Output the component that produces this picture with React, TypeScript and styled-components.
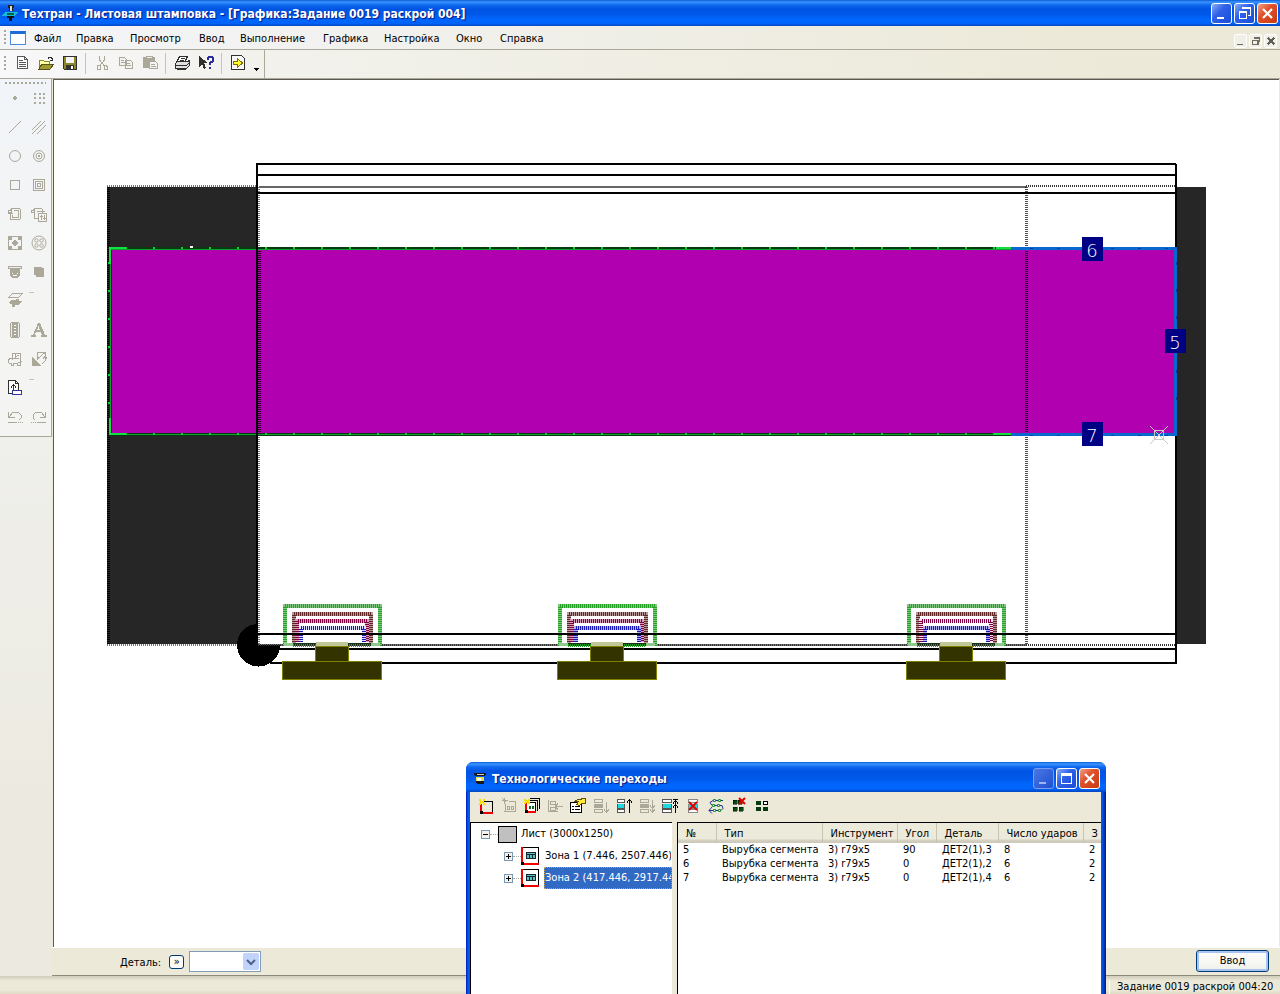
import React from "react";
import styled, { createGlobalStyle, css } from "styled-components";

const face = "#ece9d8";
const shade = "#aca899";

const GlobalStyle = createGlobalStyle`
  * { box-sizing: border-box; }
  body { margin: 0; overflow: hidden; }
  svg { overflow: visible; }
  body, button, select, input {
    font-family: "DejaVu Sans Condensed", "DejaVu Sans", sans-serif;
    font-size: 11px;
    line-height: 14px;
    color: #000;
  }
`;

const titleGradient = css`
  background: linear-gradient(180deg, #0a5bd8 0, #3b95ff 2px, #1068ee 5px, #0054e3 9px, #0058e9 55%, #0066fd 75%, #0064fa 90%, #0046c0 100%);
`;

const Shell = styled.div`
  position: relative;
  display: flex;
  flex-direction: column;
  height: 100vh;
  overflow: hidden;
  background: ${face};
`;

const TitleBar = styled.header<{ $tall?: boolean }>`
  ${titleGradient}
  display: flex;
  align-items: center;
  flex: none;
  height: ${(p) => (p.$tall ? 30 : 26)}px;
  padding: ${(p) => (p.$tall ? "3px 6px 0 7px" : "0 2px 0 2px")};
  gap: ${(p) => (p.$tall ? 5 : 4)}px;
`;

const Title = styled.h1`
  flex: 1;
  margin: 0;
  padding-top: 1px;
  font-size: 12px;
  line-height: 16px;
  font-weight: bold;
  color: #fff;
  text-shadow: 1px 1px 1px #0a1883;
  white-space: nowrap;
`;

const CaptionButtons = styled.div`
  display: flex;
  gap: 2px;
`;

const CaptionButton = styled.button<{ $kind?: "close" | "off" }>`
  display: flex;
  align-items: center;
  justify-content: center;
  width: 21px;
  height: 21px;
  padding: 0 1px 1px 0;
  border: 1px solid ${(p) => (p.$kind === "off" ? "#7c9cf0" : "#fff")};
  border-radius: 3px;
  background: ${(p) =>
    p.$kind === "close"
      ? "linear-gradient(135deg, #f0a088, #e0512b 40%, #c83a10)"
      : p.$kind === "off"
        ? "linear-gradient(135deg, #4a78e4, #1f4fd0)"
        : "linear-gradient(135deg, #8aacf8, #2f62e8 40%, #1a4cd8)"};
`;

const MenuBar = styled.nav`
  display: flex;
  align-items: center;
  flex: none;
  height: 24px;
  padding: 0 3px 0 4px;
  background: linear-gradient(90deg, #f4f5f9 0, #f0efe8 45%, ${face} 85%);
  border-bottom: 1px solid ${shade};
`;

const MenuItem = styled.a<{ $w: number }>`
  flex: none;
  width: ${(p) => p.$w}px;
  padding-top: 2px;
  color: #000;
  text-decoration: none;
  white-space: nowrap;
`;

const MdiButtons = styled.div`
  display: flex;
  align-self: flex-end;
  gap: 2px;
  margin-left: auto;
  padding-bottom: 1px;
`;

const MdiButton = styled.button`
  display: flex;
  align-items: center;
  justify-content: center;
  width: 13px;
  height: 14px;
  padding: 0;
  border: 1px solid #fff;
  border-radius: 2px;
  background: #f1f0e6;
`;

const Grip = styled.div<{ $across?: boolean }>`
  flex: none;
  ${(p) =>
    p.$across
      ? css`height: 2px; margin: 0 5px; background: repeating-linear-gradient(90deg, ${shade} 0 2px, transparent 2px 4px);`
      : css`width: 2px; height: 15px; margin-right: 4px; background: repeating-linear-gradient(180deg, ${shade} 0 2px, transparent 2px 4px);`}
`;

const DocIcon = styled.span`
  width: 16px;
  height: 14px;
  margin: 0 8px 0 0;
  border: 1px solid #4a8ad8;
  border-top: 3px solid #1c6cd8;
  background: #fff;
`;

const ToolRow = styled.div`
  flex: none;
  display: flex;
  height: 29px;
  background: linear-gradient(90deg, #f4f4f2, ${face} 90%);
  border-bottom: 1px solid ${shade};
`;

const ToolStrip = styled.div`
  display: flex;
  align-items: center;
  width: 265px;
  padding: 0 0 2px 4px;
  background: linear-gradient(90deg, #f8f8fa, #f2f1ec);
  border-right: 1px solid ${shade};
`;

const ToolButton = styled.button<{ $w?: number; $h?: number }>`
  display: flex;
  align-items: center;
  justify-content: center;
  flex: none;
  width: ${(p) => p.$w ?? 24}px;
  height: ${(p) => p.$h ?? 24}px;
  padding: 0 ${(p) => (p.$w ?? 24) % 2}px ${(p) => (p.$h ?? 24) % 2}px 0;
  border: 0;
  background: none;
`;

const Separator = styled.span`
  flex: none;
  width: 1px;
  height: 21px;
  margin: 0 4px 0 3px;
  background: #c9c5b0;
`;

const Workspace = styled.main`
  flex: 1;
  display: flex;
  min-height: 0;
`;

const SideColumn = styled.aside`
  flex: none;
  width: 52px;
  background: linear-gradient(180deg, #f2f4f8, #eceae0 80%);
`;

const Palette = styled.div`
  height: 358px;
  padding-top: 3px;
  border-right: 1px solid ${shade};
  border-bottom: 1px solid ${shade};
  background: linear-gradient(180deg, #f1f4f8, #f4f4f2 70%);
`;

const PaletteGrid = styled.div`
  display: grid;
  grid-template-columns: 24px 24px;
  padding-left: 3px;
`;

const Document = styled.section`
  flex: 1;
  display: flex;
  flex-direction: column;
  min-width: 0;
`;

const Canvas = styled.div`
  flex: 1;
  min-height: 0;
  overflow: hidden;
  margin: 0 1px;
  background: #fff;
  border-top: 1px solid #5c5a50;
  border-left: 1px solid #5c5a50;
  svg { display: block; }
`;

const InputBar = styled.form`
  flex: none;
  display: flex;
  align-items: center;
  height: 29px;
  padding: 0 11px 0 68px;
  background: ${face};
  border-top: 1px solid #fff;
  border-bottom: 1px solid #8c8a7c;
  label { padding-top: 2px; }
`;

const MoreButton = styled.button`
  width: 15px;
  height: 14px;
  margin: 0 5px 0 8px;
  padding: 0;
  border: 1px solid #003c74;
  border-radius: 3px;
  background: #fbfbf8;
  line-height: 10px;
`;

const Combo = styled.span`
  display: flex;
  width: 72px;
  height: 21px;
  padding: 1px;
  border: 1px solid #7f9db9;
  background: #fff;
  position: relative;
  svg {
    position: absolute;
    right: 1px;
    top: 1px;
    pointer-events: none;
  }
  select {
    appearance: none;
    width: 100%;
    border: 0;
    background: transparent;
  }
`;

const EnterButton = styled.button`
  width: 73px;
  height: 22px;
  margin-left: auto;
  margin-bottom: 2px;
  border: 1px solid #003c74;
  border-radius: 3px;
  background: linear-gradient(#fff, #f0f0ea);
  box-shadow: inset 0 0 0 2px #a9c3f0;
`;

const StatusBar = styled.footer`
  flex: none;
  display: flex;
  justify-content: flex-end;
  align-items: center;
  height: 18px;
  padding: 3px 0 0;
  background: linear-gradient(180deg, #d0cdbd, #ece9d8 5px, #ece9d8 14px, #dedac6);
`;

const StatusText = styled.span`
  width: 171px;
  padding-left: 7px;
  border-left: 1px solid #fff;
  white-space: nowrap;
`;

const Floating = styled.section`
  position: absolute;
  left: 466px;
  right: 174px;
  bottom: 0;
  display: flex;
  flex-direction: column;
  height: 232px;
  border-radius: 7px 7px 0 0;
  overflow: hidden;
  background: linear-gradient(90deg, #0018b8 0, #0858e8 2px, #0858e8 636px, #001890 100%);
`;

const FloatingBody = styled.div`
  flex: 1;
  display: flex;
  flex-direction: column;
  min-height: 0;
  margin: 0 5px 0 4px;
  background: ${face};
`;

const FloatingTools = styled.div`
  flex: none;
  display: flex;
  align-items: center;
  height: 30px;
  padding: 0 0 2px 5px;
`;

const Split = styled.div`
  flex: 1;
  display: flex;
  gap: 5px;
  min-height: 0;
`;

const Pane = styled.div<{ $w?: number }>`
  ${(p) => (p.$w ? `flex: none; width: ${p.$w}px;` : "flex: 1; min-width: 0;")}
  overflow: hidden;
  background: #fff;
  border-top: 1px solid #000;
  border-left: 1px solid #000;
`;

const TreeRow = styled.div<{ $child?: boolean }>`
  display: flex;
  align-items: center;
  height: 22px;
  padding-left: ${(p) => (p.$child ? 33 : 10)}px;
`;

const Expander = styled.button`
  flex: none;
  display: flex;
  width: 9px;
  height: 9px;
  padding: 1px;
  border: 1px solid #7898b5;
  background: #f4f2ec;
`;

const Dots = styled.span`
  flex: none;
  width: 8px;
  border-top: 1px dotted ${shade};
`;

const SheetSwatch = styled.span`
  width: 19px;
  height: 17px;
  margin-right: 3px;
  border: 1px solid #000;
  background: #c0c0c0;
`;

const TreeLabel = styled.span<{ $selected?: boolean; $gap?: number }>`
  flex: 1;
  height: 22px;
  margin-left: ${(p) => p.$gap ?? 0}px;
  padding: 0;
  line-height: 20px;
  white-space: nowrap;
  overflow: hidden;
  border: 1px dotted ${(p) => (p.$selected ? "#d09a40" : "transparent")};
  background: ${(p) => (p.$selected ? "#316ac5" : "transparent")};
  color: ${(p) => (p.$selected ? "#fff" : "#000")};
`;

const Steps = styled.table`
  width: 100%;
  table-layout: fixed;
  border-collapse: collapse;
  white-space: nowrap;
  td, th { overflow: hidden; font-weight: normal; text-align: left; }
  td { height: 14px; padding: 0 0 0 6px; }
  td:first-child { padding-left: 5px; }
  th {
    height: 20px;
    padding: 1px 0 0 8px;
    background: linear-gradient(180deg, #ebeadb 16px, #d6d2c2 17px, #cbc7b8);
  }
  th + th { border-left: 1px solid #c7c5b2; }
`;

const K = "#303030";
const G = shade;

/* 16×16 toolbar glyphs */
const glyphs: Record<string, React.ReactNode> = {
  app: (<><path d="M6 0h6v3h-1v3h-4v-3h-1z" fill="#222" /><path d="M8 1h2v5h-2z" fill="#ddd" /><path d="M0 10l4-3h12l-4 4h-12z" fill="#18b8d8" /><path d="M5 8h7v2h-7z" fill="#064" /><path d="M5 11h7v2h-2v3h-3v-3h-2z" fill="#111" /></>),
  fresh: (<path d="M3.5 1.500h7l3 3v9h-10zM10.500 1.500v3h3M5 5.500h4M5 7.500h7M5 9.500h7M5 11.500h7" fill="#fff" stroke={K} strokeOpacity=".8" />),
  open: (<><path d="M1.500 13.500v-8h4l1 1h5v3" fill="#ffffa8" stroke="#888820" /><path d="M1 14l3-5h12l-4 5z" fill="#a09a30" stroke="#56521c" /><path d="M9.500 3.500h1v-1h3v1h1v2M12 5.500h3" fill="none" stroke={K} /></>),
  save: (<><path d="M1.500 1.500h13v13h-12l-1-1z" fill="#8c8828" stroke={K} /><path d="M4 2h8v6h-8z" fill="#f4f4f4" /><path d="M4 10h8v4h-8z" fill="#333" /><path d="M9 11h2v3h-2z" fill="#fff" /></>),
  cut: (<path d="M5.500 1v4l5 6M10.500 1v4l-5 6M4 10.500h2v4h-3v-3zM10 10.500h2l1 1v3h-3z" fill="none" stroke={G} />),
  copy: (<path d="M1.500 2.500h5l2 2v6h-7zM3 5.500h3M3 7.500h4M7.500 5.500h5l2 2v6h-7zM9 8.500h3M9 10.500h4" fill="#f2f2f0" stroke={G} />),
  paste: (<><path d="M1 2h12v11h-12z" fill={G} /><path d="M4 1.500h6v2h-6z" fill="#eee" stroke={G} /><path d="M7.500 6.500h6l2 2v5h-8zM9 9.500h4M9 11.500h5" fill="#f4f4f2" stroke={G} /></>),
  print: (<><path d="M5.500 1.500h8l-3 6h-8z" fill="#fff" stroke={K} /><path d="M1.500 8.500l2-2h10l2-1v5l-3 3h-11z" fill="#e0e0e0" stroke={K} /><path d="M2 10.500h10l3-2M3.500 12.500v2h8l2-2M7 3.500h4M6 5.500h4" fill="none" stroke={K} /></>),
  help: (<><path d="M1 1v11l3-3 2 5 2-1-2-5h4z" fill={K} /><path d="M10 5v-2l1-1h3l1 1v3l-3 2v2" fill="none" stroke="#2c2c9c" strokeWidth="2" /><path d="M11 12h2v2h-2z" fill="#2c2c9c" /></>),
  exporter: (<><path d="M1.500 .5h10l3 3v11h-13z" fill="#f7f7f7" stroke={K} /><path d="M3.500 6.500h4v-3l5 4.500-5 4.500v-3h-4z" fill="#ffff30" stroke="#887000" /></>),
  more: (<path d="M5 13h6l-3 3z" fill="#000" />),
  point: (<path d="M7 6h2v1h1v2h-1v1h-2v-1h-1v-2h1z" fill={G} />),
  points: (<path d="M3 3h2v2h-2zM8 3h2v2h-2zM12 3h2v2h-2zM3 7h2v2h-2zM8 7h2v2h-2zM12 7h2v2h-2zM3 12h2v2h-2zM8 12h2v2h-2zM12 12h2v2h-2z" fill={G} />),
  line: (<path d="M2 14l12-12" stroke={G} />),
  lines: (<path d="M1 11l9-9M1 15l13-13M6 15l9-9" stroke={G} />),
  circle: (<circle cx="8" cy="8" r="5.500" fill="none" stroke={G} shapeRendering="auto" />),
  rings: (<><circle cx="8" cy="8" r="5.500" fill="none" stroke={G} shapeRendering="auto" /><circle cx="8" cy="8" r="3" fill="none" stroke={G} shapeRendering="auto" /><path d="M7 7h2v2h-2z" fill={G} /></>),
  square: (<path d="M3.500 3.500h9v9h-9z" fill="none" stroke={G} />),
  squares: (<path d="M2.500 2.500h11v11h-11zM4.500 4.500h7v7h-7zM6.500 6.500h3v3h-3z" fill="none" stroke={G} />),
  contour: (<path d="M3.500 7v6.500h9l1-1v-9l-1-1h-8l-1 2h-2v2h3v-4M5.500 9v2.500h6v-7h-5M1 6.500l2.500 2 3-2" fill="none" stroke={G} />),
  contourEdit: (<><path d="M3.500 7v5.500h8v-9l-1-1h-7l-1 2h-2v2h3v-4M5.500 5.500h8" fill="none" stroke={G} /><path d="M7.500 7.500h8v8h-8z" fill="#f2f4f7" stroke={G} /><path d="M10.500 9v5M9 10.500h3M13.500 9v5M12 12.500h3" stroke={G} /></>),
  holes: (<><path d="M1 1h14v14h-14z" fill={G} /><path d="M5 2h6v3h-6zM2 5h3v6h-3zM11 5h3v6h-3zM5 11h6v3h-6zM5 5h2v1h-1v1h-1zM9 5h2v2h-1v-1h-1zM5 9h1v1h1v1h-2zM10 9h1v2h-2v-1h1z" fill="#f2f4f7" /></>),
  holesRound: (<g fill="none" stroke={G} shapeRendering="auto"><circle cx="8" cy="8" r="7" /><circle cx="5.500" cy="5.500" r="1.700" /><circle cx="10.500" cy="5.500" r="1.700" /><circle cx="5.500" cy="10.500" r="1.700" /><circle cx="10.500" cy="10.500" r="1.700" /></g>),
  punch: (<><path d="M1.500 2.500h13v2h-13z" fill="#eee" stroke={G} /><path d="M3 5h10v6l-2 3h-6l-2-3z" fill={G} /><path d="M5 9h1v1h-1zM10 9h1v1h-1zM6 11h4v1h-4z" fill="#fff" /></>),
  sheet: (<path d="M3 3h8v1h2v9h-8v-2h-2z" fill={G} />),
  layers: (<><path d="M1.500 4.500l4-4h10l-4 4z" fill="none" stroke={G} /><path d="M1 10l4-3h4v-1h3v2h4l-5 4h-3v2h-3v-3z" fill={G} /></>),
  tick: (<path d="M-2 -1h5v1h-5z" fill="#c9c5a8" />),
  film: (<><rect x="3.500" y=".5" width="9" height="15" rx="2" fill="#eee" stroke={G} /><path d="M5 1h6v14h-6z" fill={G} /><path d="M7 3h2v1h-2zM7 6h2v1h-2zM7 9h2v1h-2zM7 12h2v1h-2z" fill="#fff" /></>),
  letter: (<path d="M7 1h2l5 12h2v2h-6v-2h1l-1-3h-5l-1 3h1v2h-5v-2h2zM6 8h3l-1.500-4z" fill={G} />),
  truck: (<path d="M5.500 9v-6.500h8v9M1.500 12v-3l2-2h8M2 12.500h2v2h2v-2h4v2h3v-3h-2M8.500 2v4l3-2M12.500 10.500h2" fill="none" stroke={G} />),
  turn: (<><path d="M1 6v9h9z" fill={G} /><path d="M7 1.500h7.500v7M6.500 1v7l7-6M11 13l3-3v-4M12 8l2-3 2 3" fill="none" stroke={G} /></>),
  report: (<><path d="M1.500 .5h7l3 3v10h-10zM8.500 .5v3h3" fill="#fff" stroke={K} /><path d="M6.500 10v-5M4 7.500l2.500-3 2.500 3" fill="none" stroke={K} /><path d="M5 10.500h9v4h-9z" fill="#fff" stroke="#3434a0" /></>),
  undo: (<path d="M1.500 3v5.500h6M2 8l4-5h5l3 3v3l-2 2M1 13.500h9M11 13.500h1M13 13.500h1M15 13.500h1" fill="none" stroke={G} />),
  redo: (<path d="M14.500 3v5.500h-6M14 8l-4-5h-5l-3 3v3l2 2M6 13.500h9M4 13.500h1M2 13.500h1M0 13.500h1" fill="none" stroke={G} />),
  zoneNew: (<><path d="M6 3.500h8.500v10" fill="none" stroke="#000" /><path d="M3 6v9h12" fill="none" stroke="#f00000" strokeWidth="2" /><path d="M1 1h2v2h2v-2h2v2h-1v2h1v2h-2v-2h-2v2h-2v-2h1v-2h-1z" fill="#f4e000" /><path d="M2 13h3v3h-3z" fill="#000" /></>),
  zoneNewOff: (<path d="M1 2.500h6M3.500 0v6M1.500 .5l4 4M7.500 3.500h7v10h-10v-8M3 13.500h3M6.500 8.500h2v3h-2zM10.500 8.500h2v3h-2z" fill="none" stroke={G} />),
  zones: (<><path d="M6 .5h9.500v10M5 2.500h8.500v10" fill="none" stroke="#000" /><path d="M2.500 4.500h9v9h-9z" fill="#fff" stroke="#000" /><path d="M2 5v9h10" fill="none" stroke="#f00" strokeWidth="2" /><path d="M5 8h2v3h-2zM8 8h2v3h-2z" fill="#0a6a20" /><path d="M0 1h2v1h2v-1h2v2h-1v1h1v2h-2v-1h-2v1h-2v-2h1v-1h-1z" fill="#f4e000" /><path d="M1 12h3v3h-3z" fill="#000" /></>),
  insertOff: (<path d="M1.500 2v11.500h9M3.500 3.500h5v3h-5zM3.500 9.500h5v3h-5zM8 8.500h8M8 8.500l3-3M8 8.500l3 3" fill="none" stroke={G} />),
  props: (<><path d="M.5 4.500h11v10h-11z" fill="#fff" stroke="#000" /><path d="M2 8h2v1h-2zM5 8h5v1h-5zM2 11h2v1h-2zM5 11h5v1h-5z" fill="#000" /><path d="M4.500 3.500l3-2h4v-1h4v5h-4l-2 2-3-1 2-3z" fill="#ffe840" stroke="#605000" /></>),
  downOff: (<><path d="M1.500 1.500h8v3h-8zM1.500 11.500h8v3h-8zM13.500 4v10M11 11.500l2.500 3 2.500-3" fill="none" stroke={G} /><path d="M1 6h9v4h-9z" fill={G} /></>),
  up: (<><path d="M1.500 1.500h7v3h-7zM1.500 6.500h7v4h-7zM1.500 11.500h7v3h-7z" fill="#fff" stroke="#555" /><path d="M2 6h6v4h-6z" fill="#20d8e0" /><path d="M13.500 15v-13M11 4.500l2.500-3 2.500 3" fill="none" stroke="#000" /></>),
  lastOff: (<><path d="M1.500 1.500h8v3h-8zM1.500 11.500h8v3h-8zM13.500 2v12M11 7.500l2.500 3 2.500-3M11 11.500l2.500 3 2.500-3" fill="none" stroke={G} /><path d="M1 6h9v4h-9z" fill={G} /></>),
  first: (<><path d="M.5 1.500h9v3h-9zM.5 6.500h9v4h-9zM.5 11.500h9v3h-9z" fill="#fff" stroke="#555" /><path d="M1 6h8v4h-8z" fill="#20d8e0" /><path d="M13.500 15v-13M11 1.500h5M11 5.500l2.500-3 2.500 3M11 9.500l2.500-3 2.500 3" fill="none" stroke="#000" /></>),
  remove: (<><path d="M3.500 1.500h9v3h-9zM3.500 6.500h9v4h-9zM3.500 11.500h9v3h-9z" fill="#fff" stroke="#888" /><path d="M4 6h8v4h-8z" fill="#20d8e0" /><path d="M4 4l8 8M12 4l-8 8" stroke="#e00000" strokeWidth="2" shapeRendering="auto" /></>),
  order: (<g shapeRendering="auto"><path d="M15 2.500h-10l-3 2 2 3h10l1 3-2 2h-12M4 9l-3 3.500 3 3" fill="none" stroke="#203090" /><path d="M5.500 1.500h2v2h-2zM10.500 1.500h2v2h-2zM4.500 6.500h2v2h-2zM9.500 6.500h2v2h-2zM5.500 11.500h2v2h-2zM10.500 11.500h2v2h-2z" fill="#fff" stroke="#209038" /></g>),
  clear: (<><path d="M2 2h4v4h-4zM7 2h4v4h-4zM2 9h4v4h-4zM8 9h4v4h-4z" fill="#0a4a10" stroke="#000" strokeWidth=".5" /><path d="M8 0l6 6M14 0l-6 6" stroke="#e00000" strokeWidth="2" shapeRendering="auto" /></>),
  blocks: (<><path d="M2 3h5v4h-5zM2 9h5v4h-5zM9 9h5v4h-5z" fill="#0a3a10" /><path d="M9.500 3.500h4v3h-4z" fill="#fff" stroke="#000" /></>),
  minimize: (<path d="M4 12h7v2h-7z" fill="#fff" />),
  minimizeOff: (<path d="M4 12h7v2h-7z" fill="#a0b4f0" />),
  restore: (<><path d="M6 4v-1h8v7h-2" fill="none" stroke="#fff" /><path d="M6 2h9v2h-9z" fill="#fff" /><path d="M14.500 3v7h-2M3.500 7.500h7v6h-7z" fill="none" stroke="#fff" /><path d="M3 6h8v2h-8z" fill="#fff" /></>),
  maximize: (<><path d="M3.500 3.500h10v10h-10z" fill="none" stroke="#fff" /><path d="M3 3h11v3h-11z" fill="#fff" /></>),
  close: (<path d="M4 4l9 9M13 4l-9 9" stroke="#fff" strokeWidth="2.200" shapeRendering="auto" />),
  mdiMin: (<path d="M2 12h9v3h-9z" fill="#706e62" />),
  mdiRestore: (<path d="M5 3h9v7M2 7h9v6h-9z" fill="none" stroke="#706e62" strokeWidth="2" />),
  mdiClose: (<path d="M3 3l10 10M13 3l-10 10" stroke="#605e54" strokeWidth="3.500" />),
  zone: (<><path d="M.5 .5h15v15h-15z" fill="#fff" stroke="#000" /><path d="M1 0v15h15" fill="none" stroke="#f00000" strokeWidth="2" /><path d="M0 13h3v3h-3z" fill="#000" /><path d="M5 5h8v5h-8zM5 6.500h8M7.500 6v4M10.500 6v4" fill="#60c0c0" stroke="#102830" /></>),
  tool: (<><path d="M1 1h14v2h-1v2h-12v-2h-1z" fill="#181818" /><path d="M4 2h8v1h-8z" fill="#ccc" /><path d="M3 6h10v4h-10z" fill="#e8e040" /><path d="M3 10h10v2h-1v2h-8v-2h-1z" fill="#181818" /><path d="M5 7h4v3h-4z" fill="#fff" /></>),
  plus: (<path d="M0 7h16v3h-16zM6 0h4v16h-4z" fill="#000" />),
  minus: (<path d="M0 7h16v3h-16z" fill="#000" />),
};

const Glyph = ({ name, size = 16 }: { name: string; size?: number }) => (
  <svg width={size} height={size} viewBox="0 0 16 16" shapeRendering="crispEdges" aria-hidden="true">
    {glyphs[name]}
  </svg>
);

const menu: [string, number][] = [
  ["Файл", 42], ["Правка", 54], ["Просмотр", 69], ["Ввод", 41], ["Выполнение", 83],
  ["Графика", 61], ["Настройка", 72], ["Окно", 44], ["Справка", 60],
];

const mainTools: [string, string][][] = [
  [["fresh", "Создать"], ["open", "Открыть"], ["save", "Сохранить"]],
  [["cut", "Вырезать"], ["copy", "Копировать"], ["paste", "Вставить"]],
  [["print", "Печать"], ["help", "Справка"]],
  [["exporter", "Экспорт"]],
];

const palette = [
  "point", "points", "line", "lines", "circle", "rings", "square", "squares",
  "contour", "contourEdit", "holes", "holesRound", "punch", "sheet", "layers", "tick",
  "film", "letter", "truck", "turn", "report", "tick", "undo", "redo",
];

const stepTools = [
  "zoneNew", "zoneNewOff", "zones", "insertOff", "props", "downOff", "up",
  "lastOff", "first", "remove", "order", "clear", "blocks",
];

const columns: [string, number?][] = [
  ["№", 38], ["Тип", 106], ["Инструмент", 75], ["Угол", 39], ["Деталь", 62], ["Число ударов", 85], ["З"],
];

const steps = [
  ["5", "Вырубка сегмента", "3) r79x5", "90", "ДЕТ2(1),3", "8", "2"],
  ["6", "Вырубка сегмента", "3) r79x5", "0", "ДЕТ2(1),2", "6", "2"],
  ["7", "Вырубка сегмента", "3) r79x5", "0", "ДЕТ2(1),4", "6", "2"],
];

const Clamp = ({ x, rose = "#d8a0b8", blue = "#e0e0ff" }: { x: number; rose?: string; blue?: string }) => (
  <g transform={`translate(${x} 604)`} fill="none">
    <path d="M3 42V2h95v40" stroke="#80c880" strokeWidth="4" />
    <path d="M3 42V2h95v40" stroke="#28a028" strokeWidth="4" strokeDasharray="1 1" />
    <path d="M12 42V10h77v32" stroke="#b89898" strokeWidth="4" />
    <path d="M12 42V10h77v32" stroke="#602828" strokeWidth="4" strokeDasharray="1 1" />
    <path d="M15 38V17h70v21" stroke={rose} strokeWidth="4" />
    <path d="M15 38V17h70v21" stroke="#800040" strokeWidth="4" strokeDasharray="1 1" />
    <path d="M19 38V24h63v14" stroke={blue} strokeWidth="4" />
    <path d="M19 38V24h63v14" stroke="#1818b8" strokeWidth="4" strokeDasharray="1 1" />
    <path d="M2 40h96" stroke="#90c890" strokeWidth="3" />
    <path d="M11 40h78" stroke="#183018" strokeWidth="3" />
    <path d="M11 41h78" stroke="#20a020" strokeWidth="3" strokeDasharray="1 1" />
    <path d="M34 40h32" stroke="#c0c898" strokeWidth="4" />
    <path d="M33.500 42.500h33v15h-33zM.5 57.500h99v18h-99z" fill="#333300" stroke="#808000" />
  </g>
);

const Tag = ({ x, y, n }: { x: number; y: number; n: string }) => (
  <g>
    <rect x={x} y={y} width="21" height="24" fill="#000084" />
    <text x={x + 10} y={y + 20} textAnchor="middle" fontSize="18" fontWeight="200" fill="#fff" fontFamily='"DejaVu Sans Light", "DejaVu Sans", sans-serif'>{n}</text>
  </g>
);

const SheetDrawing = () => (
  <svg width="1225" height="867" viewBox="54 80 1225 867" shapeRendering="crispEdges" role="img" aria-label="Раскрой листа">
    <rect x="107" y="187" width="151" height="457" fill="#262626" />
    <rect x="1177" y="187" width="29" height="457" fill="#262626" />
    <g fill="none" stroke="#777" strokeWidth="2" strokeDasharray="1 1">
      <path d="M107 186h151M107 645h919M259 187v458" />
    </g>
    <path d="M108 187v458" stroke="#000" strokeWidth="3" strokeDasharray="1 1" />
    <path d="M237 645a21 21 0 0 1 20-21v21h23a21 21 0 0 1-43 0z" fill="#000" />
    <rect x="110" y="249" width="1065" height="185" fill="#b000b0" />
    <g fill="none" stroke="#000" strokeWidth="2">
      <path d="M257 645V164h919M257 175h919M257 193h919M257 634h919M279 649h897M270 663h906V164" />
      <path d="M259 187h767" stroke="#666" />
      <path d="M1026 186h150M258 645h918" stroke="#333" strokeDasharray="1 1" />
      <path d="M1026 187v458M259 249v185" stroke="#000" strokeDasharray="1 1" strokeWidth="3" strokeOpacity=".7" />
    </g>
    <g fill="none">
      <path d="M1011 248H110v186h901" stroke="#083810" strokeWidth="3" />
      <path d="M1011 249H110v185h901" stroke="#10a030" strokeWidth="1" />
      <path d="M125 248H1000M125 434H1000M109 262v160" stroke="#00d830" strokeWidth="2" strokeDasharray="2 26" />
      <path d="M110 264v-16h16M110 418v16h16M996 248h15M994 434h17" stroke="#10e040" strokeWidth="2" />
      <path d="M1011 248h164v186h-164" stroke="#0868d0" strokeWidth="3" />
      <path d="M1030 248h145M1030 435h140M1176 262v160" stroke="#003c98" strokeWidth="1" strokeDasharray="3 24" />
    </g>
    <path d="M257 165v480" stroke="#000" strokeWidth="2" />
    <path d="M190 246h3v2h-3z" fill="#fff" />
    <g stroke="#c8c8c8" fill="none">
      <path d="M1150 426l18 18M1168 426l-18 18M1154.500 430.500h9v9h-9z" />
    </g>
    <Clamp x={282} />
    <Clamp x={557} blue="#b0b0f0" />
    <Clamp x={906} rose="#f4e0ea" blue="#b0b0f0" />
    <path d="M283 634h724" stroke="#000" strokeWidth="2" />
    <Tag x={1082} y={237} n="6" />
    <Tag x={1165} y={329} n="5" />
    <Tag x={1082} y={422} n="7" />
  </svg>
);

export default function App() {
  return (
    <>
      <GlobalStyle />
      <Shell>
        <TitleBar>
          <Glyph name="app" />
          <Title>Техтран - Листовая штамповка - [Графика:Задание 0019 раскрой 004]</Title>
          <CaptionButtons>
            <CaptionButton aria-label="Свернуть"><Glyph name="minimize" /></CaptionButton>
            <CaptionButton aria-label="Восстановить"><Glyph name="restore" /></CaptionButton>
            <CaptionButton $kind="close" aria-label="Закрыть"><Glyph name="close" /></CaptionButton>
          </CaptionButtons>
        </TitleBar>
        <MenuBar>
          <Grip />
          <DocIcon />
          {menu.map(([label, w]) => <MenuItem href="#" key={label} $w={w}>{label}</MenuItem>)}
          <MdiButtons>
            <MdiButton aria-label="Свернуть окно"><Glyph name="mdiMin" size={10} /></MdiButton>
            <MdiButton aria-label="Восстановить окно"><Glyph name="mdiRestore" size={10} /></MdiButton>
            <MdiButton aria-label="Закрыть окно"><Glyph name="mdiClose" size={10} /></MdiButton>
          </MdiButtons>
        </MenuBar>
        <ToolRow>
          <ToolStrip>
            <Grip />
            {mainTools.map((group, i) => (
              <React.Fragment key={i}>
                {i > 0 && <Separator />}
                {group.map(([name, label]) => (
                  <ToolButton key={name} aria-label={label}><Glyph name={name} /></ToolButton>
                ))}
              </React.Fragment>
            ))}
            <ToolButton $w={13} aria-label="Ещё"><Glyph name="more" /></ToolButton>
          </ToolStrip>
        </ToolRow>
        <Workspace>
          <SideColumn>
            <Palette>
              <Grip $across />
              <PaletteGrid>
                {palette.map((name, i) => (
                  <ToolButton key={i} $h={29} aria-label={name}><Glyph name={name} /></ToolButton>
                ))}
              </PaletteGrid>
            </Palette>
          </SideColumn>
          <Document>
            <Canvas><SheetDrawing /></Canvas>
            <InputBar onSubmit={(e) => e.preventDefault()}>
              <label htmlFor="part">Деталь:</label>
              <MoreButton type="button">»</MoreButton>
              <Combo>
                <select id="part" />
                <svg width="16" height="17" viewBox="0 0 16 17">
                  <rect width="16" height="17" rx="2" fill="#c1d3fb" />
                  <path d="M4 7l4 4 4-4" fill="none" stroke="#4d6185" strokeWidth="2" />
                </svg>
              </Combo>
              <EnterButton>Ввод</EnterButton>
            </InputBar>
          </Document>
        </Workspace>
        <StatusBar><StatusText>Задание 0019 раскрой 004:20</StatusText></StatusBar>

        <Floating>
          <TitleBar $tall>
            <Glyph name="tool" size={14} />
            <Title as="h2">Технологические переходы</Title>
            <CaptionButtons>
              <CaptionButton $kind="off" aria-label="Свернуть"><Glyph name="minimizeOff" /></CaptionButton>
              <CaptionButton aria-label="Развернуть"><Glyph name="maximize" /></CaptionButton>
              <CaptionButton $kind="close" aria-label="Закрыть"><Glyph name="close" /></CaptionButton>
            </CaptionButtons>
          </TitleBar>
          <FloatingBody>
            <FloatingTools>
              {stepTools.map((name) => (
                <ToolButton key={name} $w={23} aria-label={name}><Glyph name={name} /></ToolButton>
              ))}
            </FloatingTools>
            <Split>
              <Pane $w={202}>
                <TreeRow>
                  <Expander aria-label="Свернуть ветвь"><Glyph name="minus" size={5} /></Expander>
                  <Dots />
                  <SheetSwatch />
                  <TreeLabel>Лист (3000x1250)</TreeLabel>
                </TreeRow>
                {["Зона 1 (7.446, 2507.446)", "Зона 2 (417.446, 2917.446)"].map((label, i) => (
                  <TreeRow $child key={label}>
                    <Expander aria-label="Развернуть ветвь"><Glyph name="plus" size={5} /></Expander>
                    <Dots />
                    <Glyph name="zone" size={18} />
                    <TreeLabel $gap={5} $selected={i === 1}>{label}</TreeLabel>
                  </TreeRow>
                ))}
              </Pane>
              <Pane>
                <Steps>
                  <colgroup>{columns.map(([c, w]) => <col key={c} width={w} />)}</colgroup>
                  <thead><tr>{columns.map(([c]) => <th key={c} scope="col">{c}</th>)}</tr></thead>
                  <tbody>
                    {steps.map((row) => <tr key={row[0]}>{row.map((cell, i) => <td key={i}>{cell}</td>)}</tr>)}
                  </tbody>
                </Steps>
              </Pane>
            </Split>
          </FloatingBody>
        </Floating>
      </Shell>
    </>
  );
}
